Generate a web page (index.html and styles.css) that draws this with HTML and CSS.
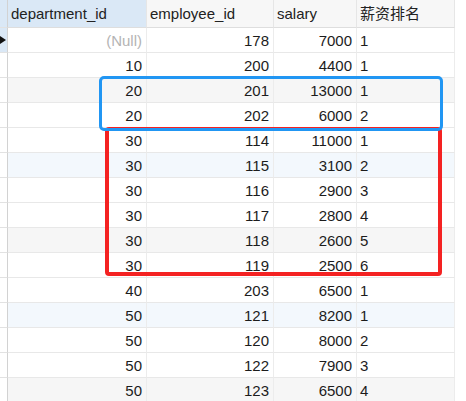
FILE: index.html
```html
<!DOCTYPE html>
<html>
<head>
<meta charset="utf-8">
<link rel="stylesheet" href="styles.css">
</head>
<body>
<div class="grid-wrap">
  <div class="row head">
    <div class="cell gut sel"></div>
    <div class="cell h sel">department_id</div>
    <div class="cell h">employee_id</div>
    <div class="cell h">salary</div>
    <div class="cell h">薪资排名</div>
  </div>
  <div class="row">
    <div class="cell gut sel"><svg class="arrow" width="7" height="10" viewBox="0 0 7 10"><polygon points="0,1 6,5 0,9" fill="#111"/></svg></div>
    <div class="cell num null">(Null)</div><div class="cell num">178</div><div class="cell num">7000</div><div class="cell txt">1</div>
  </div>
  <div class="row">
    <div class="cell gut"></div>
    <div class="cell num">10</div><div class="cell num">200</div><div class="cell num">4400</div><div class="cell txt">1</div>
  </div>
  <div class="row gray">
    <div class="cell gut"></div>
    <div class="cell num">20</div><div class="cell num">201</div><div class="cell num">13000</div><div class="cell txt">1</div>
  </div>
  <div class="row">
    <div class="cell gut"></div>
    <div class="cell num">20</div><div class="cell num">202</div><div class="cell num">6000</div><div class="cell txt">2</div>
  </div>
  <div class="row">
    <div class="cell gut"></div>
    <div class="cell num">30</div><div class="cell num">114</div><div class="cell num">11000</div><div class="cell txt">1</div>
  </div>
  <div class="row blue">
    <div class="cell gut"></div>
    <div class="cell num">30</div><div class="cell num">115</div><div class="cell num">3100</div><div class="cell txt">2</div>
  </div>
  <div class="row">
    <div class="cell gut"></div>
    <div class="cell num">30</div><div class="cell num">116</div><div class="cell num">2900</div><div class="cell txt">3</div>
  </div>
  <div class="row">
    <div class="cell gut"></div>
    <div class="cell num">30</div><div class="cell num">117</div><div class="cell num">2800</div><div class="cell txt">4</div>
  </div>
  <div class="row gray">
    <div class="cell gut"></div>
    <div class="cell num">30</div><div class="cell num">118</div><div class="cell num">2600</div><div class="cell txt">5</div>
  </div>
  <div class="row">
    <div class="cell gut"></div>
    <div class="cell num">30</div><div class="cell num">119</div><div class="cell num">2500</div><div class="cell txt">6</div>
  </div>
  <div class="row">
    <div class="cell gut"></div>
    <div class="cell num">40</div><div class="cell num">203</div><div class="cell num">6500</div><div class="cell txt">1</div>
  </div>
  <div class="row blue">
    <div class="cell gut"></div>
    <div class="cell num">50</div><div class="cell num">121</div><div class="cell num">8200</div><div class="cell txt">1</div>
  </div>
  <div class="row">
    <div class="cell gut"></div>
    <div class="cell num">50</div><div class="cell num">120</div><div class="cell num">8000</div><div class="cell txt">2</div>
  </div>
  <div class="row">
    <div class="cell gut"></div>
    <div class="cell num">50</div><div class="cell num">122</div><div class="cell num">7900</div><div class="cell txt">3</div>
  </div>
  <div class="row gray">
    <div class="cell gut"></div>
    <div class="cell num">50</div><div class="cell num">123</div><div class="cell num">6500</div><div class="cell txt">4</div>
  </div>
  <div class="mark mark-red"></div>
  <div class="mark mark-blue"></div>
</div>
</body>
</html>
```

FILE: styles.css
```css
html, body {
  margin: 0;
  padding: 0;
  background: #ffffff;
}
body {
  font-family: "Liberation Sans", Arial, "Noto Sans CJK SC", sans-serif;
  font-size: 15px;
  color: #1c1c1c;
  overflow: hidden;
}
.grid-wrap {
  position: relative;
  width: 455px;
}
.row {
  display: grid;
  grid-template-columns: 8px 139px 127px 83px 98px;
  height: 25px;
}
.row.head {
  height: 28px;
}
.cell {
  box-sizing: border-box;
  border-right: 1px solid #ececec;
  border-bottom: 1px solid #e8e8e8;
  line-height: 25px;
  white-space: nowrap;
  overflow: hidden;
}
.head .cell {
  line-height: 28px;
  background: #f7f7f7;
  border-right: 1px solid #e6e6e6;
  border-bottom: 1px solid #dedede;
  color: #222;
}
.head .cell.sel, .cell.gut.sel {
  background: #dae8f6;
}
.cell.gut {
  border-right: 1px solid #d2d2d2;
  border-bottom: 1px solid #e2e2e2;
  background: #ffffff;
  position: relative;
}
.h {
  padding-left: 3px;
}
.num {
  text-align: right;
  padding-right: 4px;
}
.txt {
  padding-left: 3px;
}
.null {
  color: #b4b4b4;
}
.row.gray .cell:not(.gut) {
  background: #f6f6f6;
}
.row.blue .cell:not(.gut) {
  background: #f3f8fd;
}
.arrow {
  position: absolute;
  left: 0;
  top: 7px;
}
.mark {
  position: absolute;
  box-sizing: border-box;
}
.mark-blue {
  left: 99px;
  top: 76px;
  width: 344px;
  height: 55px;
  border: 3px solid #2196f3;
  border-radius: 5px;
}
.mark-red {
  left: 105px;
  top: 127px;
  width: 337px;
  height: 149px;
  border: 4px solid #f42222;
  border-radius: 4px;
}
```
